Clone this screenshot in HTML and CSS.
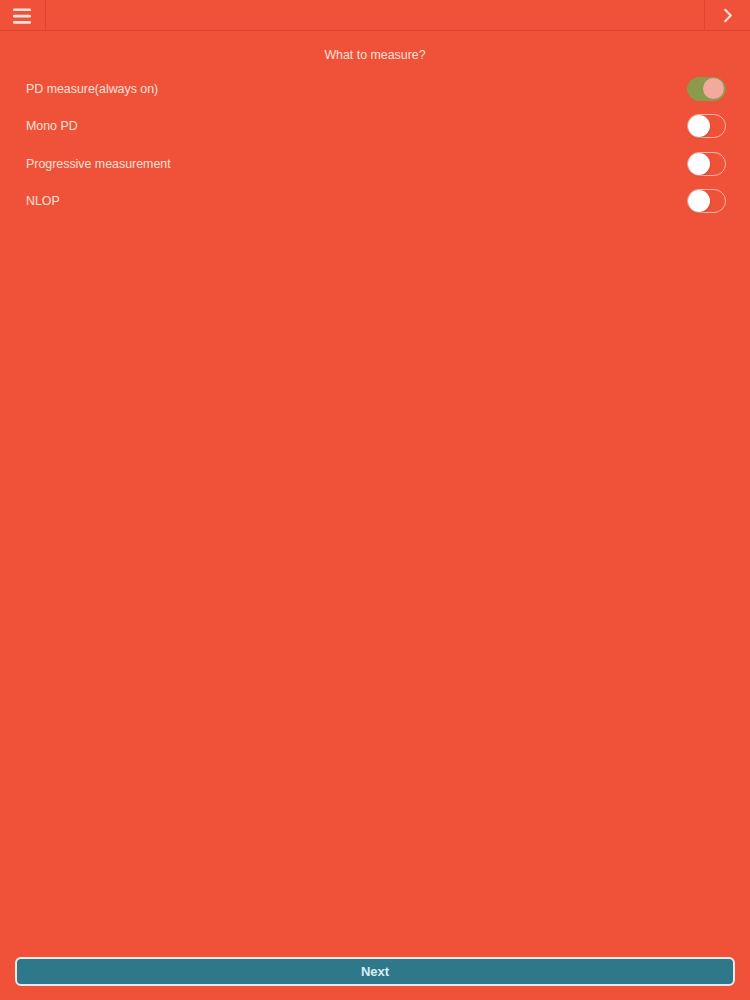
FILE: index.html
```html
<!DOCTYPE html>
<html>
<head>
<meta charset="utf-8">
<link rel="stylesheet" href="styles.css">
</head>
<body>
<div class="app">
  <header class="topbar">
    <div class="cell cell-left">
      <svg class="icon" width="18" height="16" viewBox="0 0 18 16">
        <rect x="0" y="0.5" width="18" height="2.6" rx="1.2" fill="#fbe3dc"/>
        <rect x="0" y="6.8" width="18" height="2.6" rx="1.2" fill="#fbe3dc"/>
        <rect x="0" y="13.1" width="18" height="2.6" rx="1.2" fill="#fbe3dc"/>
      </svg>
    </div>
    <div class="cell cell-mid"></div>
    <div class="cell cell-right">
      <svg class="icon" width="10" height="15" viewBox="0 0 10 15">
        <path d="M2.2 1.8 L7.8 7.5 L2.2 13.2" fill="none" stroke="#fbe3dc" stroke-width="2.1" stroke-linecap="round" stroke-linejoin="round"/>
      </svg>
    </div>
  </header>
  <main class="content">
    <div class="title">What to measure?</div>
    <ul class="options">
      <li class="option"><span class="label">PD measure(always on)</span><span class="toggle on"><span class="knob"></span></span></li>
      <li class="option"><span class="label">Mono PD</span><span class="toggle"><span class="knob"></span></span></li>
      <li class="option"><span class="label">Progressive measurement</span><span class="toggle"><span class="knob"></span></span></li>
      <li class="option"><span class="label">NLOP</span><span class="toggle"><span class="knob"></span></span></li>
    </ul>
  </main>
  <footer class="footer">
    <button class="next">Next</button>
  </footer>
</div>
</body>
</html>
```

FILE: styles.css
```css
html, body {
  margin: 0;
  padding: 0;
  height: 100%;
  background: #ef5238;
}
body {
  font-family: "Liberation Sans", Arial, sans-serif;
  color: #fbe0d8;
}
.app {
  height: 1000px;
  display: flex;
  flex-direction: column;
}
.topbar {
  height: 30px;
  display: flex;
  border-bottom: 1.5px solid #dc4530;
}
.cell {
  display: flex;
  align-items: center;
  justify-content: center;
}
.cell-left {
  width: 45px;
  border-right: 1px solid #dc4530;
}
.cell-mid {
  flex: 1;
}
.cell-right {
  width: 45px;
  border-left: 1px solid #dc4530;
}
.cell-left .icon {
  margin-left: -1px;
  margin-top: 1px;
}
.cell-right .icon {
  margin-left: 1px;
  margin-top: 1px;
}
.content {
  flex: 1;
}
.title {
  text-align: center;
  font-size: 12.4px;
  margin-top: 16px;
  line-height: 16px;
}
.options {
  list-style: none;
  margin: 7px 0 0;
  padding: 0 24px 0 26px;
}
.option {
  height: 37.5px;
  display: flex;
  align-items: center;
  justify-content: space-between;
  font-size: 12.4px;
}
.toggle {
  height: 22px;
  border-radius: 12px;
  border: 1px solid #f7b8aa;
  display: flex;
  align-items: center;
  padding: 0 1px;
  box-sizing: content-box;
  width: 35px;
}
.knob {
  width: 22px;
  height: 22px;
  border-radius: 50%;
  background: #ffffff;
  box-shadow: 0 1px 2px rgba(120, 30, 20, 0.35);
  margin-left: -1px;
}
.toggle.on {
  background: #8b9a4c;
  border-color: #8b9a4c;
  justify-content: flex-end;
}
.toggle.on .knob {
  background: #f3aa9c;
  width: 21px;
  height: 21px;
  margin-left: 0;
  margin-right: 0;
  box-shadow: none;
}
.footer {
  padding: 0 15px 14px;
}
.next {
  width: 100%;
  height: 29px;
  background: #2f788b;
  border: 2px solid #ebe9e8;
  border-radius: 6px;
  color: #d7eef2;
  font-family: "Liberation Sans", Arial, sans-serif;
  font-weight: bold;
  font-size: 13px;
  display: block;
}
```
